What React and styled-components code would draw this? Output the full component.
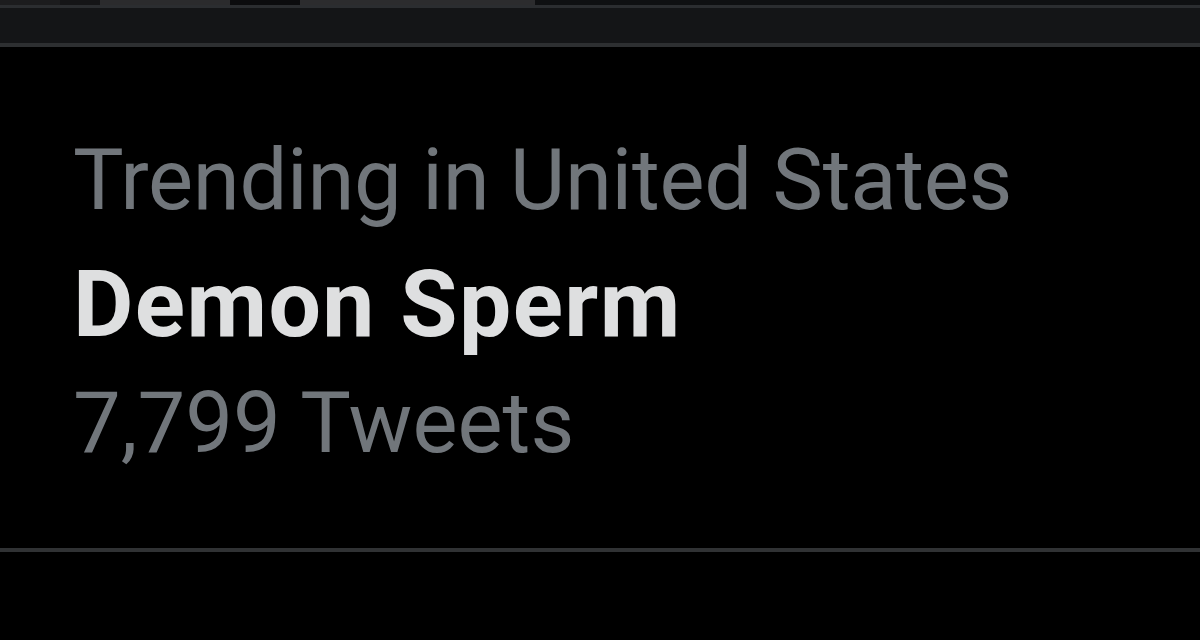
import React from "react";
import styled, { createGlobalStyle } from "styled-components";

const GlobalStyle = createGlobalStyle`
  html, body {
    margin: 0;
    padding: 0;
    background: #000;
  }
  body {
    font-family: Roboto, "Noto Sans", "Liberation Sans", sans-serif;
    overflow: hidden;
  }
`;

const Page = styled.div`
  width: 1200px;
  height: 640px;
  background: #000;
  display: flex;
  flex-direction: column;
`;

/* bottom edge of the media above, cut off by the screenshot */
const MediaStrip = styled.div`
  height: 5px;
  display: flex;
  background: #0f1012;
  flex-shrink: 0;
`;

const MediaPiece = styled.div`
  width: ${(p) => p.$width}px;
  background: ${(p) => p.$color};
`;

const Divider = styled.div`
  height: ${(p) => p.$size || 4}px;
  background: ${(p) => p.$color || "#2f3133"};
  flex-shrink: 0;
`;

const Spacer = styled.div`
  height: 35px;
  background: #141517;
  flex-shrink: 0;
`;

const Trend = styled.div`
  display: flex;
  flex-direction: column;
  padding: 76px 0 74px 73px;
  flex-shrink: 0;
`;

const Context = styled.div`
  color: #71767b;
  font-size: 85px;
  line-height: 115px;
  letter-spacing: -0.3px;
  white-space: nowrap;
`;

const Title = styled.div`
  color: #dedfe0;
  font-size: 93px;
  font-weight: 700;
  line-height: 134px;
  letter-spacing: 1.4px;
  white-space: nowrap;
`;

const Count = styled.div`
  color: #71767b;
  font-size: 85px;
  line-height: 102px;
  white-space: nowrap;
`;

export default function App() {
  return (
    <Page>
      <GlobalStyle />
      <MediaStrip>
        <MediaPiece $width={60} $color="#1c1c1e" />
        <MediaPiece $width={40} $color="#151517" />
        <MediaPiece $width={130} $color="#2b2b2d" />
        <MediaPiece $width={70} $color="#0c0c0e" />
        <MediaPiece $width={235} $color="#2c2c2e" />
        <MediaPiece $width={665} $color="#0f1012" />
      </MediaStrip>
      <Divider $size={3} $color="#2b2d30" />
      <Spacer />
      <Divider $size={4} $color="#2d2f31" />
      <Trend>
        <Context>Trending in United States</Context>
        <Title>Demon Sperm</Title>
        <Count>7,799 Tweets</Count>
      </Trend>
      <Divider $size={4} $color="#303234" />
    </Page>
  );
}
